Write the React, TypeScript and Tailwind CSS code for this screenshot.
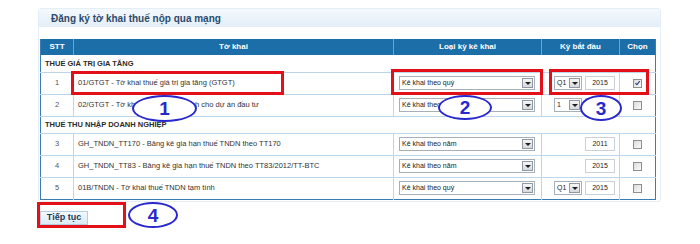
import React from 'react';

type Row =
  | { kind: 'section'; title: string }
  | { kind: 'item'; stt: number; name: string; loai: string; ky?: string; year?: string; checked?: boolean };

const rows: Row[] = [
  { kind: 'section', title: 'THUẾ GIÁ TRỊ GIA TĂNG' },
  { kind: 'item', stt: 1, name: '01/GTGT - Tờ khai thuế giá trị gia tăng (GTGT)', loai: 'Kê khai theo quý', ky: 'Q1', year: '2015', checked: true },
  { kind: 'item', stt: 2, name: '02/GTGT - Tờ khai thuế GTGT dành cho dự án đầu tư', loai: 'Kê khai theo tháng', ky: '1', year: '' },
  { kind: 'section', title: 'THUẾ THU NHẬP DOANH NGHIỆP' },
  { kind: 'item', stt: 3, name: 'GH_TNDN_TT170 - Bảng kê gia hạn thuế TNDN theo TT170', loai: 'Kê khai theo năm', year: '2011' },
  { kind: 'item', stt: 4, name: 'GH_TNDN_TT83 - Bảng kê gia hạn thuế TNDN theo TT83/2012/TT-BTC', loai: 'Kê khai theo năm', year: '2015' },
  { kind: 'item', stt: 5, name: '01B/TNDN - Tờ khai thuế TNDN tạm tính', loai: 'Kê khai theo quý', ky: 'Q1', year: '2015' },
];

const Arrow = () => (
  <span className="m-[1px] flex h-[10px] w-[11px] shrink-0 flex-col items-center justify-center border border-[#8f98a3] bg-gradient-to-b from-[#f6f6f6] to-[#d6d9dd]">
    <span className="h-0 w-0 border-x-[3px] border-t-[3px] border-x-transparent border-t-[#1f1f1f]" />
  </span>
);

const Checkbox = ({ checked }: { checked?: boolean }) => (
  <span className="mx-auto flex h-[9px] w-[9px] items-center justify-center border border-[#8e8e8e] bg-gradient-to-br from-[#dcdcdc] to-[#fafafa]">
    {checked && (
      <svg viewBox="0 0 10 10" className="h-[8px] w-[8px]">
        <path d="M2 5.2 L4.2 7.4 L8.2 2.2" fill="none" stroke="#2b3f8c" strokeWidth="1.6" />
      </svg>
    )}
  </span>
);

export default function App() {
  return (
    <div className="relative h-[244px] w-[700px] overflow-hidden bg-white font-['Liberation_Sans',Arial,sans-serif] text-[#333]">
      {/* panel */}
      <div className="ml-[38px] mt-[8px] w-[623px] rounded-[3px] border border-[#e4eef6] pb-[1px]">
        <div className="flex h-[18px] items-center bg-gradient-to-b from-[#f4f9fd] to-[#e3eef8] pl-[12px] text-[10px] font-bold text-[#2b4a6c]">
          Đăng ký tờ khai thuế nộp qua mạng
        </div>
        <table className="ml-[1px] mt-[12px] w-[615px] table-fixed border-collapse border-x border-b border-[#3b7db0] text-[7.5px]">
          <colgroup>
            <col className="w-[33px]" />
            <col className="w-[320px]" />
            <col className="w-[148px]" />
            <col className="w-[78px]" />
            <col className="w-[36px]" />
          </colgroup>
          <thead>
            <tr className="h-[16px] bg-[#1b6ea8] text-[8px] font-bold text-white">
              <th className="border-r border-[#6aa4d2]">STT</th>
              <th className="border-r border-[#6aa4d2]">Tờ khai</th>
              <th className="border-r border-[#6aa4d2]">Loại kỳ kê khai</th>
              <th className="border-r border-[#6aa4d2]">Kỳ bắt đầu</th>
              <th>Chọn</th>
            </tr>
          </thead>
          <tbody>
            {rows.map((r, i) =>
              r.kind === 'section' ? (
                <tr key={i} className="h-[17px] border-b border-[#bcd7eb]">
                  <td colSpan={5} className="pl-[4px] text-[7.5px] font-bold text-[#2a2a2a]">
                    {r.title}
                  </td>
                </tr>
              ) : (
                <tr key={i} className="h-[22px] border-b border-[#bcd7eb] last:border-b-0">
                  <td className="border-r border-[#bcd7eb] text-center text-[#555]">{r.stt}</td>
                  <td className="truncate border-r border-[#bcd7eb] pl-[4px] text-[#333]">{r.name}</td>
                  <td className="border-r border-[#bcd7eb] pl-[5px]">
                    <div className="flex h-[14px] w-[136px] items-center border border-[#a7afb9] bg-white">
                      <span className="flex-1 truncate pl-[2px] text-[7px] text-[#222]">{r.loai}</span>
                      <Arrow />
                    </div>
                  </td>
                  <td className="border-r border-[#bcd7eb]">
                    <div className="flex items-center justify-end gap-[3px] pr-[4px]">
                      {r.ky && (
                        <div className="flex h-[14px] w-[28px] items-center border border-[#a7afb9] bg-white">
                          <span className="flex-1 pl-[2px] text-[7px] text-[#222]">{r.ky}</span>
                          <Arrow />
                        </div>
                      )}
                      <div className="flex h-[14px] w-[30px] items-center justify-center border border-[#c9d0d8] bg-white text-[7px] text-[#222]">
                        {r.year}
                      </div>
                    </div>
                  </td>
                  <td>
                    <Checkbox checked={r.checked} />
                  </td>
                </tr>
              )
            )}
          </tbody>
        </table>
      </div>

      <button className="ml-[40px] mt-[9px] flex h-[14px] w-[48px] items-center justify-center border border-[#b3cde2] bg-gradient-to-b from-[#f3f9fe] to-[#dcebf7] text-[9px] font-bold text-[#1f3a58]">
        Tiếp tục
      </button>

      {/* annotations */}
      <div className="absolute left-[71px] top-[71px] h-[24px] w-[213px] border-[3px] border-[#e3101a]" />
      <div className="absolute left-[391px] top-[69px] h-[26px] w-[152px] border-[3px] border-[#e3101a]" />
      <div className="absolute left-[549px] top-[69px] h-[26px] w-[100px] border-[3px] border-[#e3101a]" />
      <div className="absolute left-[37px] top-[202px] h-[26px] w-[89px] border-[3px] border-[#e3101a]" />

      <div className="absolute left-[132px] top-[95px] flex h-[27px] w-[65px] items-center justify-center rounded-[50%] border-2 border-[#2828cc] bg-white text-[19px] font-bold leading-none text-[#2828cc]">1</div>
      <div className="absolute left-[438px] top-[95px] flex h-[25px] w-[54px] items-center justify-center rounded-[50%] border-2 border-[#2828cc] bg-white text-[19px] font-bold leading-none text-[#2828cc]">2</div>
      <div className="absolute left-[580px] top-[95px] flex h-[26px] w-[42px] items-center justify-center rounded-[50%] border-2 border-[#2828cc] bg-white text-[19px] font-bold leading-none text-[#2828cc]">3</div>
      <div className="absolute left-[128px] top-[202px] flex h-[26px] w-[50px] items-center justify-center rounded-[50%] border-2 border-[#2828cc] bg-white text-[19px] font-bold leading-none text-[#2828cc]">4</div>
    </div>
  );
}
